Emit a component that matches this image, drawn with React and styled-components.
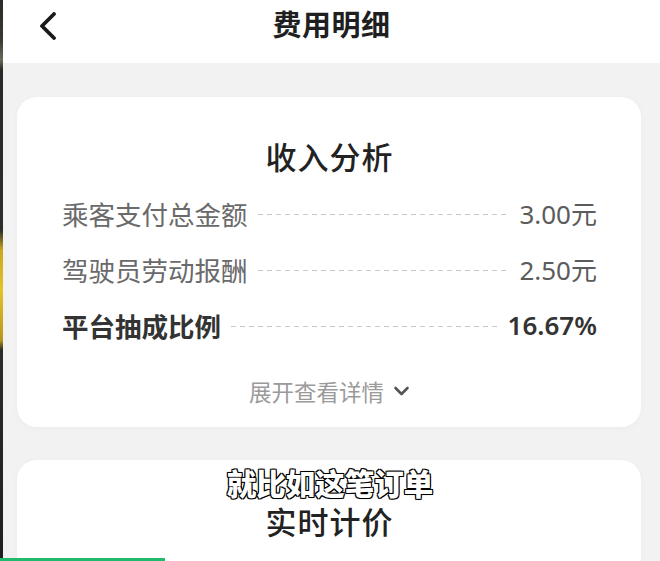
import React from "react";
import styled, { createGlobalStyle } from "styled-components";

const Global = createGlobalStyle`
  html, body { margin: 0; padding: 0; background: #f2f2f2; }
  body { font-family: "Noto Sans CJK SC", "Noto Sans", sans-serif; }
  #root { width: 660px; height: 561px; overflow: hidden; position: relative; }
`;

const Frame = styled.div`
  display: flex;
  width: 660px;
  height: 561px;
  position: relative;
  overflow: hidden;
`;

const EdgeStrip = styled.div`
  width: 3px;
  flex: none;
  background: linear-gradient(
    to bottom,
    #2a2a26 0px,
    #3a3a34 40px,
    #6b6b5a 60px,
    #2a2a26 70px,
    #2c2c28 230px,
    #c9a720 250px,
    #e2c42a 290px,
    #b8961c 340px,
    #2c2c28 350px,
    #1f1f1c 561px
  );
`;

const Main = styled.div`
  flex: 1;
  display: flex;
  flex-direction: column;
  background: #f2f2f2;
`;

const Header = styled.header`
  height: 63px;
  box-sizing: border-box;
  flex: none;
  background: #ffffff;
  display: grid;
  grid-template-columns: 1fr auto 1fr;
  align-items: start;
  align-content: start;
  padding: 5px 0 0 35px;
`;

const BackButton = styled.div`
  width: 20px;
  height: 36px;
  margin-top: 3px;
  display: flex;
  align-items: center;
`;

const Title = styled.h1`
  margin: 0 35px 0 0;
  font-size: 29px;
  line-height: 36px;
  font-weight: 700;
  color: #1f1f1f;
  letter-spacing: 0.5px;
`;

const Content = styled.div`
  flex: 1;
  display: flex;
  flex-direction: column;
  gap: 33px;
  padding: 34px 19px 0 14px;
`;

const Card = styled.section`
  background: #ffffff;
  border-radius: 20px;
  box-shadow: 0 1px 6px rgba(0, 0, 0, 0.03);
  padding: ${(p) => p.$pad};
  display: flex;
  flex-direction: column;
`;

const CardTitle = styled.h2`
  margin: 0;
  text-align: center;
  font-size: 31px;
  line-height: ${(p) => p.$lh || "40px"};
  font-weight: 500;
  color: #222222;
  letter-spacing: 1px;
`;

const Rows = styled.div`
  display: flex;
  flex-direction: column;
  margin-top: 9px;
`;

const Row = styled.div`
  height: 56px;
  display: flex;
  align-items: center;
  gap: 10px;
`;

const Label = styled.span`
  font-size: 26.5px;
  font-weight: ${(p) => (p.$strong ? 700 : 400)};
  color: ${(p) => (p.$strong ? "#333333" : "#6a6a6a")};
  white-space: nowrap;
`;

const Dashes = styled.span`
  flex: 1;
  height: 1px;
  margin-top: 2px;
  background-image: linear-gradient(to right, #c8c8c8 0 5px, transparent 5px 9px);
  background-size: 9px 1px;
  background-repeat: repeat-x;
`;

const Value = styled.span`
  font-family: "Noto Sans", "Noto Sans CJK SC", sans-serif;
  font-size: 26px;
  font-weight: ${(p) => (p.$strong ? 600 : 400)};
  color: ${(p) => (p.$strong ? "#333333" : "#5c5c5c")};
  white-space: nowrap;
`;

const Unit = styled.span`
  font-family: "Noto Sans CJK SC", sans-serif;
`;

const Expand = styled.div`
  margin-top: 21px;
  height: 34px;
  display: flex;
  align-items: center;
  justify-content: center;
  gap: 9px;
  font-size: 22.5px;
  color: #9a9a9a;
`;

const Subtitle = styled.div`
  position: absolute;
  left: 0;
  right: 0;
  top: 466px;
  text-align: center;
  font-size: 29.5px;
  line-height: 32px;
  font-weight: 800;
  color: #ffffff;
  -webkit-text-stroke: 1px #111;
  paint-order: stroke fill;
  text-shadow: 0 0 2px #000, 1px 1px 0 #000, -1px -1px 0 #000, 1px -1px 0 #000, -1px 1px 0 #000;
`;

const Progress = styled.div`
  position: absolute;
  left: 0;
  bottom: 0;
  width: 165px;
  height: 3px;
  background: #22b96c;
`;

const rows = [
  { label: "乘客支付总金额", value: "3.00", unit: "元" },
  { label: "驾驶员劳动报酬", value: "2.50", unit: "元" },
  { label: "平台抽成比例", value: "16.67%", unit: "", strong: true },
];

export default function App() {
  return (
    <>
      <Global />
      <Frame>
        <EdgeStrip />
        <Main>
          <Header>
            <BackButton>
              <svg width="20" height="28" viewBox="0 0 20 28">
                <path d="M16 2 L4 14 L16 26" fill="none" stroke="#1a1a1a" strokeWidth="3.8" strokeLinecap="round" strokeLinejoin="round" />
              </svg>
            </BackButton>
            <Title>费用明细</Title>
            <span />
          </Header>
          <Content>
            <Card $pad="39px 44px 19px 45px">
              <CardTitle>收入分析</CardTitle>
              <Rows>
                {rows.map((r) => (
                  <Row key={r.label}>
                    <Label $strong={r.strong}>{r.label}</Label>
                    <Dashes />
                    <Value $strong={r.strong}>
                      {r.value}
                      {r.unit && <Unit>{r.unit}</Unit>}
                    </Value>
                  </Row>
                ))}
              </Rows>
              <Expand>
                <span>展开查看详情</span>
                <svg width="17" height="12" viewBox="0 0 17 12">
                  <path d="M2.5 3 L8.5 9 L14.5 3" fill="none" stroke="#555" strokeWidth="2.6" strokeLinecap="round" strokeLinejoin="round" />
                </svg>
              </Expand>
            </Card>
            <Card $pad="45px 44px 60px 45px">
              <CardTitle $lh="32px">实时计价</CardTitle>
            </Card>
          </Content>
        </Main>
        <Subtitle>就比如这笔订单</Subtitle>
        <Progress />
      </Frame>
    </>
  );
}
